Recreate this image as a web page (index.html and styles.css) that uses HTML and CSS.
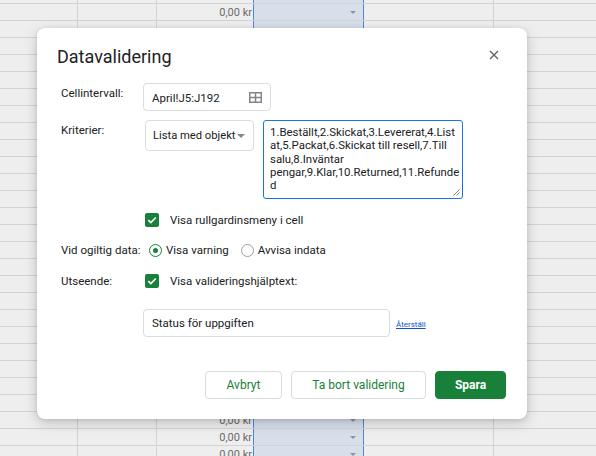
FILE: index.html
```html
<!DOCTYPE html>
<html>
<head>
<meta charset="utf-8">
<link rel="stylesheet" href="styles.css">
</head>
<body>
<div class="sheet">
  <div class="row first"><div class="c c1"></div><div class="c c2"></div><div class="c c3"></div><div class="c c4"></div><div class="c c5"></div><div class="c c6"></div></div>
  <div class="rows" id="rows"></div>
</div>

<div class="dialog">
  <div class="head">
    <h1 class="title">Datavalidering</h1>
    <svg class="close" width="10" height="10" viewBox="0 0 10 10"><path d="M1 1L9 9M9 1L1 9" stroke="#5f6368" stroke-width="1.4"/></svg>
  </div>

  <div class="form">
    <div class="frow r-range">
      <div class="lbl l-top">Cellintervall:</div>
      <div class="input range">
        <span>April!J5:J192</span>
        <svg width="13" height="11" viewBox="0 0 13 11"><rect x="0.75" y="0.75" width="11.5" height="9.5" fill="none" stroke="#80868b" stroke-width="1.5"/><path d="M6.5 1V10M1 5.5H12" stroke="#80868b" stroke-width="1.5"/></svg>
      </div>
    </div>

    <div class="frow r-crit">
      <div class="lbl l-top">Kriterier:</div>
      <div class="select"><span>Lista med objekt</span><i class="caret"></i></div>
      <div class="textarea">1.Beställt,2.Skickat,3.Levererat,4.List<br>at,5.Packat,6.Skickat till resell,7.Till<br>salu,8.Inväntar<br>pengar,9.Klar,10.Returned,11.Refunde<br>d
        <svg class="grip" width="7" height="7" viewBox="0 0 7 7"><path d="M6.5 0.5L0.5 6.5M6.5 3.5L3.5 6.5" stroke="#777" stroke-width="0.9"/></svg>
      </div>
    </div>

    <div class="frow r-drop">
      <div class="lbl"></div>
      <span class="cb"><svg width="14" height="14" viewBox="0 0 14 14"><path d="M3.3 7.2L5.8 9.6L10.8 4.5" fill="none" stroke="#fff" stroke-width="1.7"/></svg></span>
      <span class="cblabel">Visa rullgardinsmeny i cell</span>
    </div>

    <div class="frow r-inv">
      <div class="lbl">Vid ogiltig data:</div>
      <span class="radio on"></span><span class="rlabel">Visa varning</span>
      <span class="radio second"></span><span class="rlabel">Avvisa indata</span>
    </div>

    <div class="frow r-look">
      <div class="lbl">Utseende:</div>
      <span class="cb"><svg width="14" height="14" viewBox="0 0 14 14"><path d="M3.3 7.2L5.8 9.6L10.8 4.5" fill="none" stroke="#fff" stroke-width="1.7"/></svg></span>
      <span class="cblabel">Visa valideringshjälptext:</span>
    </div>

    <div class="frow r-help">
      <div class="lbl"></div>
      <div class="input helptext">Status för uppgiften</div>
      <a class="reset" href="#">Återställ</a>
    </div>
  </div>

  <div class="actions">
    <button class="btn b1">Avbryt</button>
    <button class="btn b2">Ta bort validering</button>
    <button class="btn primary">Spara</button>
  </div>
</div>

<script src="script.js"></script>
</body>
</html>
```

FILE: script.js
```js
var rows = document.getElementById('rows');
var html = '';
for (var i = 0; i < 27; i++) {
  var txt = (i === 0 || i >= 24) ? '<span class="kr">0,00 kr</span>' : '';
  html += '<div class="row"><div class="c c1"></div><div class="c c2"></div><div class="c c3">' + txt + '</div><div class="c c4"><i class="arrow"></i></div><div class="c c5"></div><div class="c c6"></div></div>';
}
rows.innerHTML = html;
```

FILE: styles.css
```css
* { box-sizing: border-box; }
html, body { margin: 0; padding: 0; }
body {
  width: 596px;
  height: 456px;
  overflow: hidden;
  background: #eeeeee;
  font-family: Roboto, "Liberation Sans", Arial, sans-serif;
  position: relative;
}

/* background sheet */
.sheet { width: 596px; }
.row {
  display: grid;
  grid-template-columns: 78px 79px 96px 111px 130px 1fr;
  height: 17px;
  border-bottom: 1px solid #d3d3d3;
}
.row.first { height: 4px; }
.c { border-right: 1px solid #d3d3d3; position: relative; }
.c3 { border-right: none; display: flex; justify-content: flex-end; align-items: flex-end; padding: 0 1px 2px 0; }
.c4 { background: #d7dfeb; border-left: 1px solid #4d86de; border-right: 1px solid #4d86de; display: flex; justify-content: flex-end; align-items: center; padding: 1px 7px 0 0; }
.c6 { border-right: none; }
.kr { font-size: 11px; color: #6b6b6b; line-height: 11px; }
.arrow { width: 0; height: 0; border-left: 3.5px solid transparent; border-right: 3.5px solid transparent; border-top: 3.5px solid #8f949b; }

/* dialog */
.dialog {
  position: absolute;
  left: 37px;
  top: 28px;
  width: 490px;
  height: 391px;
  background: #fff;
  border-radius: 8px;
  box-shadow: 0 4px 14px rgba(0,0,0,0.18), 0 1px 4px rgba(0,0,0,0.1);
  color: #202124;
  font-size: 11.5px;
}
.head {
  display: flex;
  justify-content: space-between;
  align-items: flex-start;
  padding: 18px 28px 0 20px;
  height: 46px;
}
.title {
  margin: 0;
  font-weight: 400;
  font-size: 18px;
  line-height: 22px;
  color: #202124;
}
.close { margin-top: 4px; }

.form { padding-left: 24px; margin-top: 9px; }
.frow { display: flex; align-items: center; }
.lbl { width: 82px; flex: none; font-size: 11.5px; line-height: 14px; color: #202124; white-space: nowrap; }
.l-top { align-self: flex-start; padding-top: 3px; }

.input {
  border: 1px solid #dadce0;
  border-radius: 4px;
  height: 28px;
  display: flex;
  align-items: center;
  padding: 0 8px;
  font-size: 11.5px;
  color: #202124;
}
.range { width: 128px; justify-content: space-between; padding-top: 2px; }
.range svg { margin-top: -2px; }

.r-crit { align-items: flex-start; margin-top: 9px; }
.select {
  width: 109px;
  height: 31px;
  border: 1px solid #dadce0;
  border-radius: 4px;
  display: flex;
  align-items: center;
  justify-content: space-between;
  padding: 0 8px 0 7px;
  font-size: 11.2px;
  white-space: nowrap;
  color: #202124;
  margin-left: 2px;
}
.caret { width: 0; height: 0; border-left: 4px solid transparent; border-right: 4px solid transparent; border-top: 4px solid #80868b; margin-top: 1px; }
.textarea {
  position: relative;
  width: 200px;
  height: 79px;
  margin-left: 9px;
  border: 1px solid #1a73e8;
  border-radius: 3px;
  padding: 5px 0 0 6px;
  font-size: 11.4px;
  line-height: 13.35px;
  white-space: nowrap;
  color: #202124;
}
.grip { position: absolute; right: 2px; bottom: 2px; }

.r-drop { margin-top: 13px; height: 16px; }
.r-inv { margin-top: 14px; height: 16px; }
.r-look { margin-top: 15px; height: 16px; }
.cb {
  width: 14px; height: 14px;
  background: #188038;
  border-radius: 2px;
  margin-left: 2px;
  display: inline-flex;
  flex: none;
}
.cblabel { margin-left: 11px; font-size: 11.5px; color: #202124; white-space: nowrap; }

.radio {
  width: 13px; height: 13px;
  border: 1.5px solid #9aa0a6;
  border-radius: 50%;
  margin-left: 6px;
  display: inline-flex; align-items: center; justify-content: center;
  flex: none;
}
.radio.second { margin-left: 12px; }
.radio.on { border-color: #188038; }
.radio.on::after { content: ""; width: 5px; height: 5px; border-radius: 50%; background: #188038; }
.rlabel { margin-left: 4px; font-size: 11.5px; color: #202124; white-space: nowrap; }

.r-help { margin-top: 20px; }
.helptext { width: 247px; font-size: 11.5px; }
.reset { margin-left: 6px; font-size: 8px; color: #1155cc; text-decoration: underline; margin-top: 3px; }

.actions {
  display: flex;
  justify-content: flex-end;
  gap: 9px;
  padding-right: 21px;
  margin-top: 34px;
}
.btn {
  height: 28px;
  border: 1px solid #dadce0;
  background: #fff;
  border-radius: 4px;
  font-family: Roboto, "Liberation Sans", Arial, sans-serif;
  font-size: 12px;
  color: #188038;
  padding: 0;
  font-weight: 400;
  white-space: nowrap;
}
.b1 { width: 77px; }
.b2 { width: 135px; }
.btn.primary { width: 71px; background: #188038; border-color: #188038; color: #fff; font-weight: 700; }
```
